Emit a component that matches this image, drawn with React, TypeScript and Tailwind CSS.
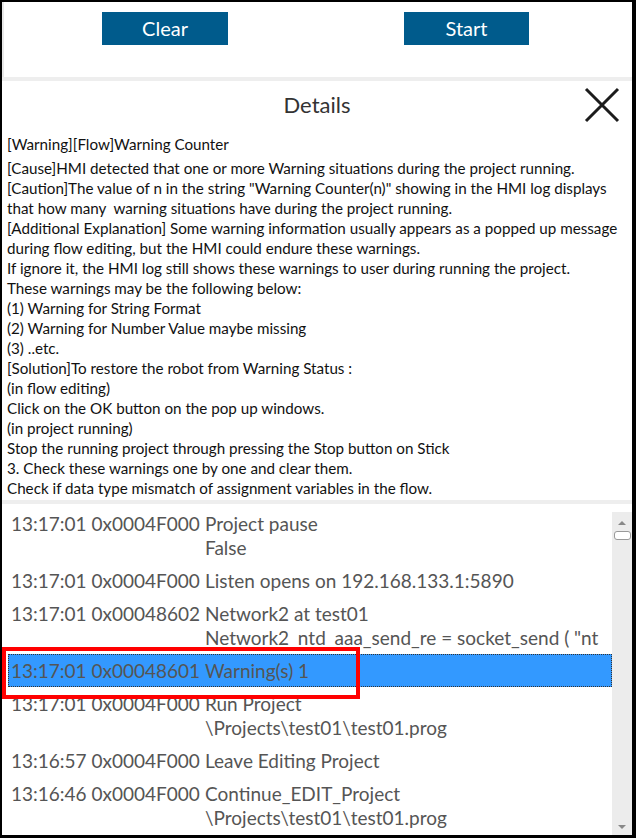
import React from 'react';

const detailLines = [
  '[Cause]HMI detected that one or more Warning situations during the project running.',
  '[Caution]The value of n in the string "Warning Counter(n)" showing in the HMI log displays',
  'that how many  warning situations have during the project running.',
  '[Additional Explanation] Some warning information usually appears as a popped up message',
  'during flow editing, but the HMI could endure these warnings.',
  'If ignore it, the HMI log still shows these warnings to user during running the project.',
  'These warnings may be the following below:',
  '(1) Warning for String Format',
  '(2) Warning for Number Value maybe missing',
  '(3) ..etc.',
  '[Solution]To restore the robot from Warning Status :',
  '(in flow editing)',
  'Click on the OK button on the pop up windows.',
  '(in project running)',
  'Stop the running project through pressing the Stop button on Stick',
  '3. Check these warnings one by one and clear them.',
  'Check if data type mismatch of assignment variables in the flow.',
];

const logRows = [
  { time: '13:17:01', code: '0x0004F000', lines: ['Project pause', 'False'] },
  { time: '13:17:01', code: '0x0004F000', lines: ['Listen opens on 192.168.133.1:5890'] },
  {
    time: '13:17:01',
    code: '0x00048602',
    lines: ['Network2 at test01', 'Network2_ntd_aaa_send_re = socket_send ( "nt'],
  },
  { time: '13:17:01', code: '0x00048601', lines: ['Warning(s) 1'], selected: true },
  { time: '13:17:01', code: '0x0004F000', lines: ['Run Project', '\\Projects\\test01\\test01.prog'] },
  { time: '13:16:57', code: '0x0004F000', lines: ['Leave Editing Project'] },
  {
    time: '13:16:46',
    code: '0x0004F000',
    lines: ['Continue_EDIT_Project', '\\Projects\\test01\\test01.prog'],
  },
];

export default function App() {
  return (
    <div
      className="relative w-[636px] h-[838px] overflow-hidden bg-white border-t-2 border-l-2 border-r-4 border-b-[3px] border-black flex flex-col"
      style={{ fontFamily: 'Lato, "Noto Sans", sans-serif' }}
    >
      {/* Buttons */}
      <div className="h-[75px] flex items-start pt-[10px] pl-[98px] gap-[176px] border-l-2 border-[#e8e8e8] shrink-0">
        <button className="w-[126px] h-[33px] pb-[2px] bg-[#005b8c] text-white text-[20px] leading-none">
          Clear
        </button>
        <button className="w-[125px] h-[33px] pb-[2px] bg-[#005b8c] text-white text-[20px] leading-none">
          Start
        </button>
      </div>

      <div className="h-[4px] bg-[#eeeeee] shrink-0" />

      {/* Details */}
      <div className="h-[419px] shrink-0 flex flex-col">
        <div className="relative h-[46px] flex items-center justify-center">
          <span className="text-[22px] text-[#333]">Details</span>
          <svg
            className="absolute right-[11px] top-[5px]"
            width="38"
            height="38"
            viewBox="0 0 38 38"
          >
            <path d="M3 3 L35 35 M35 3 L3 35" stroke="#1c1c1c" strokeWidth="3" fill="none" />
          </svg>
        </div>
        <div className="mt-[7px] pl-[5px] text-[15.2px] leading-[20px] text-[#111]">
          <div className="mb-[4px]">[Warning][Flow]Warning Counter</div>
          {detailLines.map((l, i) => (
            <div key={i} className="whitespace-pre">
              {l}
            </div>
          ))}
        </div>
      </div>

      <div className="h-[4px] bg-[#eeeeee] shrink-0" />

      {/* Log */}
      <div className="flex-1 flex min-h-0">
        <div className="flex-1 pt-[3px] pl-[6px] overflow-hidden text-[19px] leading-[24px] text-[#555]">
          {logRows.map((r, i) => (
            <div
              key={i}
              className={
                r.selected
                  ? 'flex py-[3.5px] pl-[2px] bg-[#3399ff] border border-dotted border-[#333]'
                  : 'flex py-[4.5px] pl-[3px]'
              }
            >
              <div className="w-[194px] shrink-0 whitespace-nowrap">
                {r.time} {r.code}
              </div>
              <div className="whitespace-nowrap">
                {r.lines.map((l, j) => (
                  <div key={j}>{l}</div>
                ))}
              </div>
            </div>
          ))}
        </div>
        <div className="w-[20px] mt-[8px] bg-[#ececec] flex flex-col items-center shrink-0">
          <svg width="8" height="5" viewBox="0 0 8 5" className="mt-[8px]">
            <path d="M0 5 L4 1 L8 5 Z" fill="#888" />
          </svg>
          <div className="mt-[6px] w-[17px] h-[9px] rounded-[3px] border border-[#999] bg-white" />
          <div className="flex-1" />
          <svg width="8" height="5" viewBox="0 0 8 5" className="mb-[5px]">
            <path d="M0 0 L4 4 L8 0 Z" fill="#888" />
          </svg>
        </div>
      </div>

      {/* Annotation box */}
      <div className="absolute left-0 top-[645px] w-[358px] h-[52px] border-4 border-[#ff0000]" />
    </div>
  );
}
